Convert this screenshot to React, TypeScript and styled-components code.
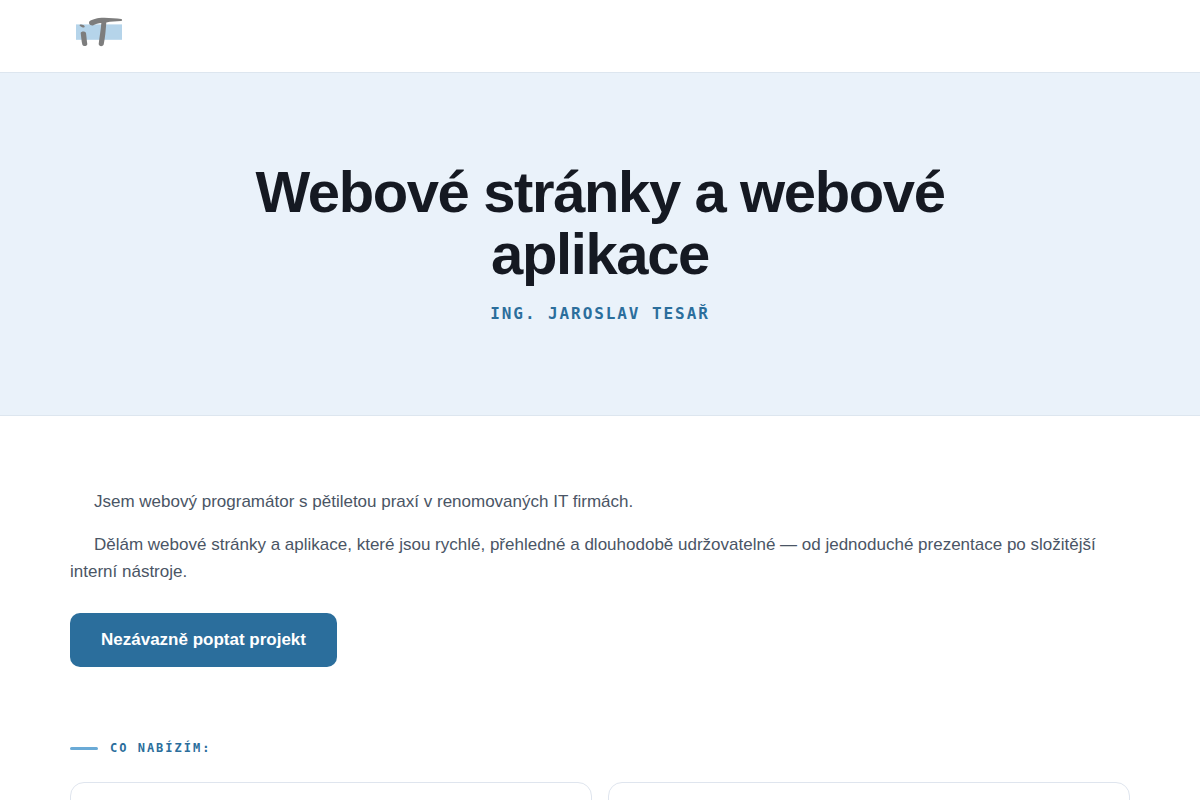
import React from "react";
import styled, { createGlobalStyle } from "styled-components";

const GlobalStyle = createGlobalStyle`
  *, *::before, *::after {
    box-sizing: border-box;
  }

  body {
    margin: 0;
    background: #ffffff;
    color: #4a5565;
    font-family: "Liberation Sans", Arial, sans-serif;
    font-size: 17px;
    line-height: 27px;
  }
`;

const Container = styled.div`
  max-width: 1100px;
  margin: 0 auto;
  padding: 0 20px;
`;

const Header = styled.header`
  height: 73px;
  border-bottom: 1px solid #dde6ef;
  background: #ffffff;
`;

const LogoLink = styled.a`
  display: inline-flex;
  padding: 12px 2px 0;
`;

const Hero = styled.section`
  padding: 88px 20px;
  border-bottom: 1px solid #dde6ef;
  background: #eaf2fa;
  text-align: center;
`;

const HeroTitle = styled.h1`
  max-width: 820px;
  margin: 0 auto 16px;
  color: #151922;
  font-size: 58px;
  font-weight: 700;
  line-height: 62px;
  letter-spacing: -0.024em;
`;

const HeroName = styled.p`
  margin: 0;
  color: #2b6e9c;
  font-family: "DejaVu Sans Mono", monospace;
  font-size: 16px;
  font-weight: 700;
  line-height: 26px;
  letter-spacing: 0.12em;
  text-transform: uppercase;
`;

const Main = styled.main`
  padding: 72px 0;
`;

const Intro = styled.section`
  margin-bottom: 68px;
`;

const Paragraph = styled.p`
  margin: 0 0 16px;
  text-indent: 24px;
`;

const CallToAction = styled.a`
  display: inline-block;
  margin-top: 12px;
  padding: 13px 31px 14px;
  border-radius: 10px;
  background: #2b6e9c;
  color: #ffffff;
  font-weight: 700;
  text-decoration: none;
  vertical-align: top;
`;

const SectionLabel = styled.h2`
  display: flex;
  align-items: center;
  gap: 12px;
  margin: 0 0 20px;
  color: #2b6e9c;
  font-family: "DejaVu Sans Mono", monospace;
  font-size: 12px;
  font-weight: 700;
  line-height: 27px;
  letter-spacing: 2px;
  text-transform: uppercase;

  &::before {
    content: "";
    width: 28px;
    height: 3px;
    border-radius: 2px;
    background: #6aaad6;
  }
`;

const Cards = styled.div`
  display: grid;
  grid-template-columns: repeat(2, 1fr);
  gap: 16px;
`;

const Card = styled.article`
  min-height: 160px;
  border: 1px solid #dfe5ee;
  border-radius: 14px;
  background: #ffffff;
`;

function Logo() {
  return (
    <svg width="54" height="38" viewBox="0 0 54 38" aria-hidden="true">
      <rect x="4" y="12.4" width="46" height="15.4" fill="#b5d4ea" />
      <g fill="#7d7d7d">
        <path d="M7.6 12.9C8.6 11.8 12 12.6 12.7 14.2C12.9 15.6 11.4 16 10.1 15.2C9 14.6 7.4 14.1 7.6 12.9Z" />
        <path d="M8.7 21C9 19 13.4 18.9 14 21C14.6 24.5 14.6 28 15.3 32C15.2 34.6 11.2 34.8 10.3 32.6C9.4 29 9.2 24.8 8.7 21Z" />
        <path d="M17 10.4C17.4 8.2 22.5 6.9 27 6.1C34 5.2 43 6.6 49.3 6.9C50.6 7.3 50.4 8.8 49 9.1C44 9.6 39 9.6 34.3 10.4C33.8 17.6 33.1 25.6 31.7 32.6C30.6 34.9 26.9 34.6 26.7 32C27.4 25 28.9 18 29.3 11C26.4 11.2 23.5 12.3 20.9 13.4C18.9 13.7 16.8 12.2 17 10.4Z" />
      </g>
    </svg>
  );
}

export default function App() {
  return (
    <>
      <GlobalStyle />
      <Header>
        <Container>
          <LogoLink href="/" aria-label="iT">
            <Logo />
          </LogoLink>
        </Container>
      </Header>
      <Hero>
        <HeroTitle>Webové stránky a webové aplikace</HeroTitle>
        <HeroName>Ing. Jaroslav Tesař</HeroName>
      </Hero>
      <Main>
        <Container>
          <Intro>
            <Paragraph>Jsem webový programátor s pětiletou praxí v renomovaných IT firmách.</Paragraph>
            <Paragraph>
              Dělám webové stránky a aplikace, které jsou rychlé, přehledné a dlouhodobě udržovatelné — od jednoduché
              prezentace po složitější interní nástroje.
            </Paragraph>
            <CallToAction href="#kontakt">Nezávazně poptat projekt</CallToAction>
          </Intro>
          <SectionLabel>Co nabízím:</SectionLabel>
          <Cards>
            <Card />
            <Card />
          </Cards>
        </Container>
      </Main>
    </>
  );
}
